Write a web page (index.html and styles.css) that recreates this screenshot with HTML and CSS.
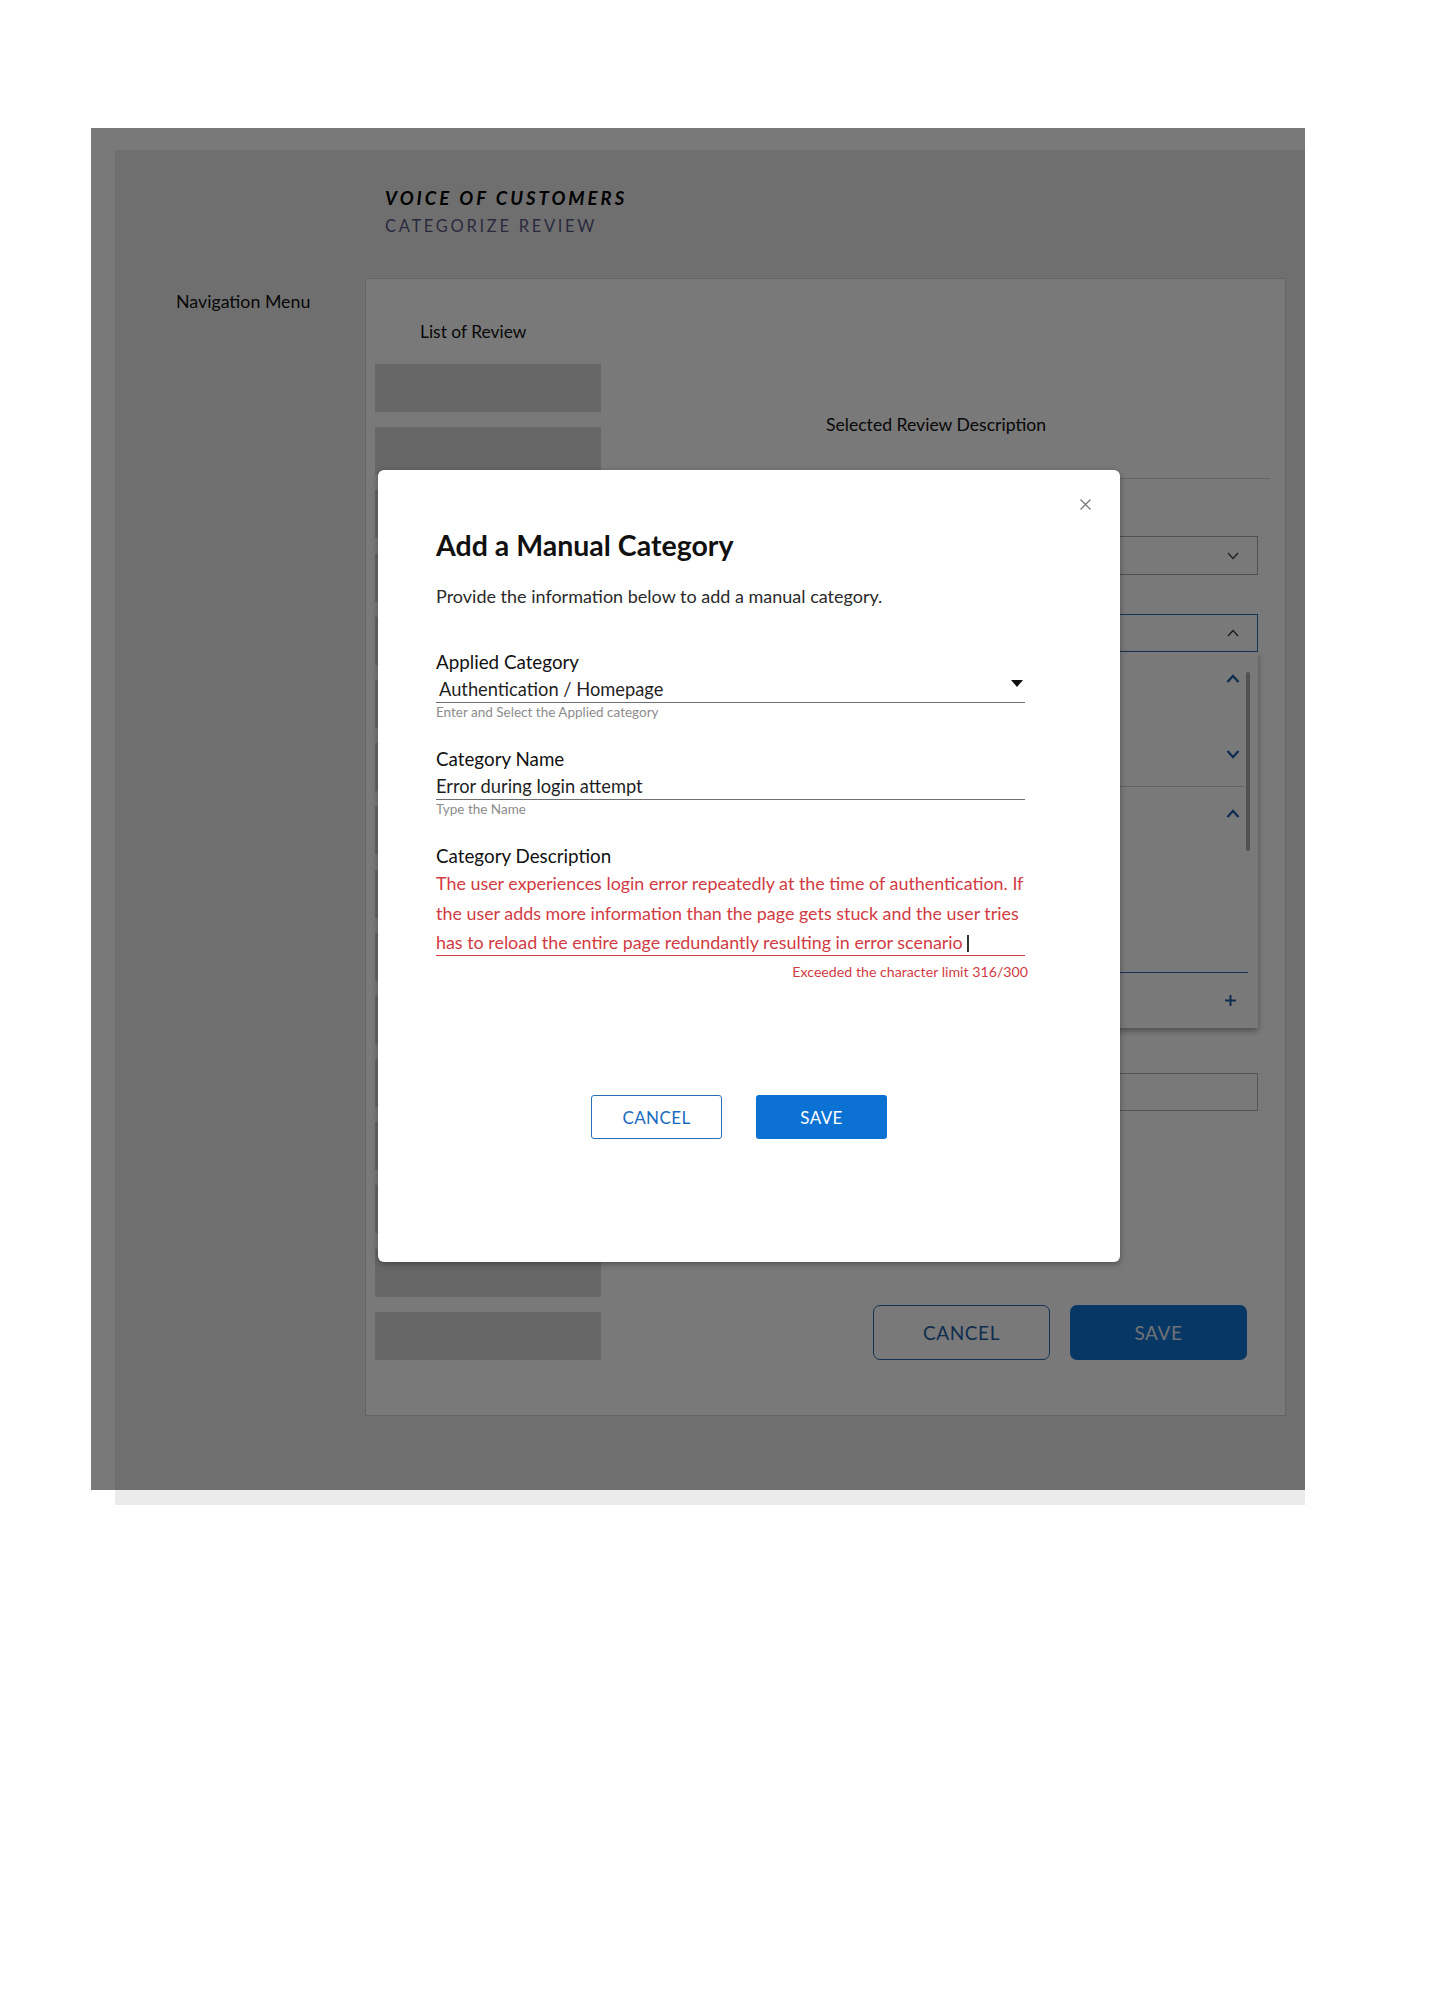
FILE: index.html
```html
<!DOCTYPE html>
<html lang="en">
<head>
<meta charset="utf-8">
<title>Voice of Customers - Add a Manual Category</title>
<link rel="stylesheet" href="styles.css">
</head>
<body>
<div class="frame">
  <header class="app-header">
    <div class="app-title">VOICE OF CUSTOMERS</div>
    <div class="app-subtitle">CATEGORIZE REVIEW</div>
  </header>
  <div class="app-body">
    <nav class="nav">Navigation Menu</nav>
    <main class="panel">
      <section class="list-col">
        <div class="list-title">List of Review</div>
        <div class="list">
          <div class="list-item"></div><div class="list-item"></div><div class="list-item"></div><div class="list-item"></div>
          <div class="list-item"></div><div class="list-item"></div><div class="list-item"></div><div class="list-item"></div>
          <div class="list-item"></div><div class="list-item"></div><div class="list-item"></div><div class="list-item"></div>
          <div class="list-item"></div><div class="list-item"></div><div class="list-item"></div><div class="list-item"></div>
        </div>
      </section>
      <section class="detail-col">
        <div class="detail-title">Selected Review Description</div>
        <div class="detail-rule"></div>
        <div class="select">
          <svg class="chev" width="12" height="8" viewBox="0 0 12 8"><polyline points="1,1 6,6.5 11,1" fill="none" stroke="#444" stroke-width="1.3"/></svg>
        </div>
        <div class="select select-open">
          <svg class="chev" width="12" height="8" viewBox="0 0 12 8"><polyline points="1,7 6,1.5 11,7" fill="none" stroke="#333" stroke-width="1.3"/></svg>
        </div>
        <div class="menu">
          <div class="menu-group menu-group-first">
            <svg class="chev-blue" width="14" height="9" viewBox="0 0 14 9"><polyline points="1.5,8 7,2 12.5,8" fill="none" stroke="#1c5ea6" stroke-width="2.2"/></svg>
            <svg class="chev-blue" width="14" height="9" viewBox="0 0 14 9"><polyline points="1.5,1 7,7 12.5,1" fill="none" stroke="#1c5ea6" stroke-width="2.2"/></svg>
          </div>
          <div class="menu-group">
            <svg class="chev-blue" width="14" height="9" viewBox="0 0 14 9"><polyline points="1.5,8 7,2 12.5,8" fill="none" stroke="#1c5ea6" stroke-width="2.2"/></svg>
          </div>
          <div class="menu-footer">
            <svg width="13" height="13" viewBox="0 0 13 13"><path d="M6.5 1v11M1 6.5h11" stroke="#1c5ea6" stroke-width="2"/></svg>
          </div>
          <div class="scrollbar"></div>
        </div>
        <div class="input-box"></div>
        <div class="actions">
          <button class="btn-outline-lg">CANCEL</button>
          <button class="btn-fill-lg">SAVE</button>
        </div>
      </section>
    </main>
  </div>
</div>

<div class="overlay"></div>

<div class="modal" role="dialog">
  <svg class="modal-close" width="13" height="13" viewBox="0 0 13 13"><path d="M1.5 1.5l10 10M11.5 1.5l-10 10" stroke="#7a7a7a" stroke-width="1.4"/></svg>
  <h2 class="modal-title">Add a Manual Category</h2>
  <p class="modal-intro">Provide the information below to add a manual category.</p>

  <div class="field field-first">
    <div class="field-label">Applied Category</div>
    <div class="field-input field-select">
      <span class="field-value indent">Authentication / Homepage</span>
      <svg class="caret" width="12" height="7" viewBox="0 0 12 7"><polygon points="0,0 12,0 6,7" fill="#111"/></svg>
    </div>
    <div class="field-help">Enter and Select the Applied category</div>
  </div>

  <div class="field">
    <div class="field-label">Category Name</div>
    <div class="field-input">
      <span class="field-value">Error during login attempt</span>
    </div>
    <div class="field-help">Type the Name</div>
  </div>

  <div class="field">
    <div class="field-label">Category Description</div>
    <div class="field-textarea">The user experiences login error repeatedly at the time of authentication. If<br>the user adds more information than the page gets stuck and the user tries<br>has to reload the entire page redundantly resulting in error scenario <span class="cursor"></span></div>
    <div class="field-error">Exceeded the character limit 316/300</div>
  </div>

  <div class="modal-actions">
    <button class="btn-outline">CANCEL</button>
    <button class="btn-fill">SAVE</button>
  </div>
</div>
</body>
</html>
```

FILE: styles.css
```css
* { box-sizing: border-box; }

html, body {
  margin: 0;
  padding: 0;
  background: #ffffff;
  font-family: Lato, "Noto Sans", "Liberation Sans", sans-serif;
  color: #222;
}

body {
  position: relative;
  min-height: 2000px;
}

/* ---------- background application ---------- */
.frame {
  margin: 150px 0 0 115px;
  width: 1190px;
  height: 1355px;
  background: #ebebeb;
  display: flex;
  flex-direction: column;
}

.app-header {
  height: 128px;
  padding: 37px 0 0 270px;
}

.app-title {
  font-size: 18.5px;
  line-height: 22px;
  font-weight: 700;
  font-style: italic;
  letter-spacing: 3px;
  color: #000;
}

.app-subtitle {
  margin-top: 7px;
  font-size: 16.5px;
  line-height: 20px;
  letter-spacing: 2.7px;
  color: #5a5a85;
}

.app-body {
  display: flex;
}

.nav {
  width: 250px;
  padding: 12px 0 0 61px;
  font-size: 17.8px;
  line-height: 22px;
  color: #111;
}

.panel {
  width: 921px;
  height: 1138px;
  background: #fff;
  border: 1px solid #d6d6d6;
  display: flex;
  padding-left: 9px;
}

.list-col {
  width: 226px;
}

.list-title {
  padding: 43px 0 0 45px;
  height: 85px;
  font-size: 17.4px;
  line-height: 20px;
  color: #111;
}

.list {
  display: flex;
  flex-direction: column;
  gap: 15.2px;
}

.list-item {
  height: 48px;
  background: #d9d9d9;
}

.detail-col {
  margin-left: 39px;
  width: 618px;
  display: flex;
  flex-direction: column;
}

.detail-title {
  margin-top: 136px;
  padding-left: 186px;
  font-size: 17.6px;
  line-height: 20px;
  color: #111;
}

.detail-rule {
  margin-top: 43px;
  height: 1px;
  margin-right: -12px;
  background: #d4d4d4;
}

.select {
  margin-top: 57px;
  height: 39px;
  border: 1px solid #a9a9a9;
  display: flex;
  align-items: center;
  justify-content: flex-end;
  padding-right: 18px;
}

.select-open {
  margin-top: 39px;
  height: 38px;
  border-color: #2a6fb5;
}

.menu {
  position: relative;
  height: 376px;
  background: #fff;
  box-shadow: 0 3px 6px rgba(0, 0, 0, 0.35);
  display: flex;
  flex-direction: column;
}

.menu-group {
  display: flex;
  flex-direction: column;
  align-items: flex-end;
  justify-content: space-between;
  padding: 22px 18px 0 0;
}

.menu-group-first {
  height: 135px;
  padding-bottom: 27px;
  border-bottom: 1px solid #d2d2d2;
  margin-right: 14px;
  padding-right: 4px;
}

.menu-footer {
  margin-top: auto;
  margin-right: 10px;
  height: 56px;
  border-top: 1.5px solid #2a6fb5;
  display: flex;
  align-items: center;
  justify-content: flex-end;
  padding-right: 11px;
}

.scrollbar {
  position: absolute;
  right: 8px;
  top: 20px;
  width: 4px;
  height: 179px;
  background: #a8a8a8;
  border-radius: 2px;
}

.input-box {
  margin-top: 45px;
  height: 38px;
  border: 1px solid #b3b3b3;
}

.actions {
  margin-top: 194px;
  display: flex;
  justify-content: flex-end;
  gap: 20px;
  padding-right: 11px;
}

.btn-outline-lg, .btn-fill-lg {
  height: 55px;
  width: 177px;
  border-radius: 7px;
  font-family: Lato, "Noto Sans", sans-serif;
  font-size: 19px;
  letter-spacing: 0.6px;
}

.btn-outline-lg {
  background: #fff;
  border: 1.5px solid #2b6cb0;
  color: #1f5fa6;
}

.btn-fill-lg {
  background: #0d74d6;
  border: none;
  color: #e8eef6;
}

/* ---------- overlay + modal ---------- */
.overlay {
  position: absolute;
  left: 91px;
  top: 128px;
  width: 1214px;
  height: 1362px;
  background: rgba(0, 0, 0, 0.525);
}

.modal {
  position: absolute;
  left: 378px;
  top: 470px;
  width: 742px;
  height: 792px;
  background: #fff;
  border-radius: 6px;
  box-shadow: 0 2px 6px rgba(0, 0, 0, 0.35);
  padding: 60px 95px 0 58px;
}

.modal-close {
  position: absolute;
  top: 28px;
  right: 28px;
}

.modal-title {
  margin: 0;
  font-size: 28.5px;
  line-height: 30px;
  font-weight: 700;
  color: #111;
}

.modal-intro {
  margin: 26px 0 0;
  font-size: 18px;
  line-height: 20px;
  color: #2a2a2a;
}

.field {
  margin-top: 30px;
}

.field-first {
  margin-top: 46px;
}

.field-label {
  font-size: 18.8px;
  line-height: 20px;
  color: #111;
}

.field-input {
  margin-top: 7px;
  display: flex;
  align-items: center;
  justify-content: space-between;
  padding-bottom: 3px;
  border-bottom: 1.3px solid #6f6f6f;
}

.field-value {
  font-size: 18.3px;
  line-height: 20px;
  color: #1f1f1f;
}

.indent {
  padding-left: 3px;
}

.caret {
  margin: -12px 2px 0 0;
}

.field-help {
  margin-top: 2px;
  font-size: 13.5px;
  line-height: 14px;
  color: #8c8c8c;
}

.field-textarea {
  margin-top: 3px;
  height: 87px;
  font-size: 17.9px;
  line-height: 29.5px;
  color: #d23b43;
  border-bottom: 1.5px solid #d23b43;
  white-space: nowrap;
}

.cursor {
  display: inline-block;
  width: 1.5px;
  height: 17px;
  background: #333;
  vertical-align: -3px;
}

.field-error {
  margin: 9px -3px 0 0;
  text-align: right;
  font-size: 14.2px;
  line-height: 14px;
  color: #d23b43;
}

.modal-actions {
  margin-top: 116px;
  display: flex;
  gap: 34px;
  padding-left: 155px;
}

.btn-outline, .btn-fill {
  height: 44px;
  width: 131px;
  border-radius: 3px;
  font-family: Lato, "Noto Sans", sans-serif;
  font-size: 17px;
  letter-spacing: 0.4px;
}

.btn-outline {
  background: #fff;
  border: 1.3px solid #2a6fb5;
  color: #1b6bbf;
}

.btn-fill {
  background: #0b72d4;
  border: none;
  color: #fff;
}
```
